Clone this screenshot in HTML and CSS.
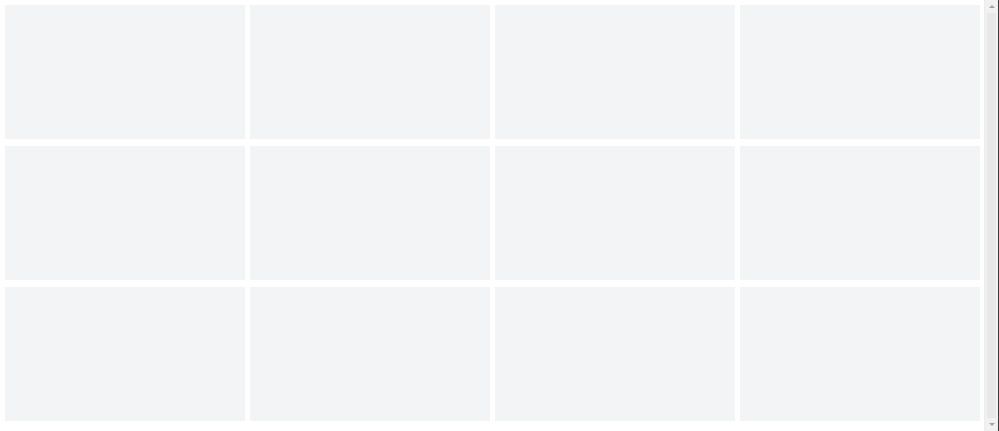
FILE: index.html
```html
<!DOCTYPE html>
<html lang="en">
<head>
<meta charset="utf-8">
<title>Grid</title>
<link rel="stylesheet" href="styles.css">
</head>
<body>
<main class="grid">
  <div class="card"></div>
  <div class="card"></div>
  <div class="card"></div>
  <div class="card"></div>
  <div class="card"></div>
  <div class="card"></div>
  <div class="card"></div>
  <div class="card"></div>
  <div class="card"></div>
  <div class="card"></div>
  <div class="card"></div>
  <div class="card"></div>
</main>
<div class="scrollbar" aria-hidden="true">
  <span class="arrow up"></span>
  <span class="thumb"></span>
  <span class="arrow down"></span>
</div>
</body>
</html>
```
FILE: styles.css
```css
html, body {
  margin: 0;
  padding: 0;
  background: #ffffff;
  font-family: "Liberation Sans", Arial, sans-serif;
}
.grid {
  display: grid;
  grid-template-columns: repeat(4, 240px);
  column-gap: 5px;
  row-gap: 7px;
  padding: 5px 4px 4px 5px;
}
.card {
  height: 134px;
  background: #f3f4f6;
}
.scrollbar {
  position: fixed;
  top: 0;
  right: 0;
  width: 13px;
  height: 100%;
  background: #f1f1f1;
  border-left: 1px solid #ececec;
  border-right: 1px solid #3a3a3a;
  display: flex;
  flex-direction: column;
  align-items: center;
}
.arrow {
  width: 0;
  height: 0;
  border-left: 3px solid transparent;
  border-right: 3px solid transparent;
  margin: 5px 0;
}
.arrow.up {
  border-bottom: 3px solid #a3a3a3;
}
.arrow.down {
  border-top: 3px solid #a3a3a3;
}
.thumb {
  flex: 1;
  width: 9px;
  background: #e8e8e8;
  border-radius: 1px;
}
```
